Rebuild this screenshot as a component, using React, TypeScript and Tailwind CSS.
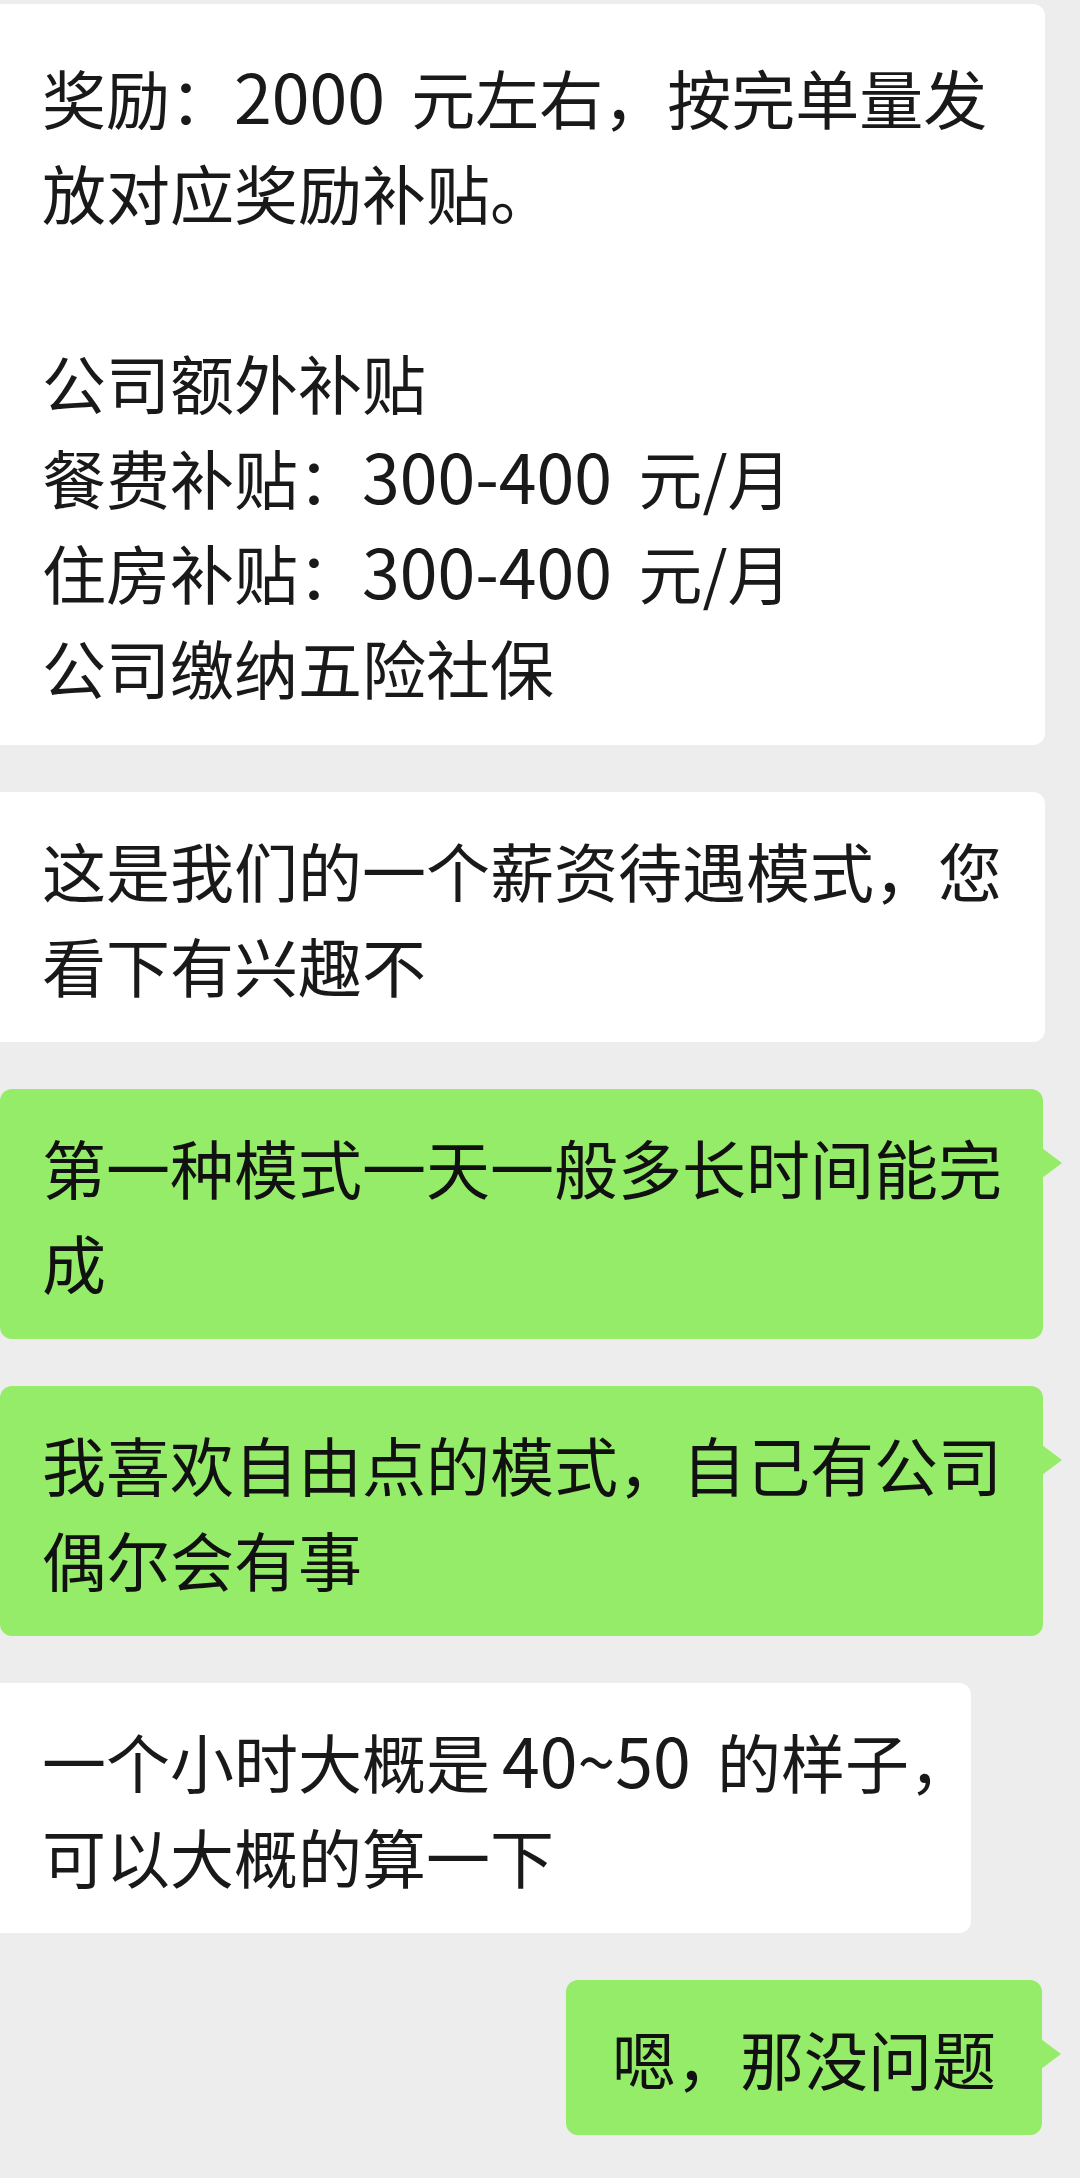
import React from "react";

const font = {
  fontFamily: '"Noto Sans CJK SC", "Noto Sans", sans-serif',
};

type Line = React.ReactNode;

function Lines({ lines }: { lines: Line[] }) {
  return (
    <>
      {lines.map((l, i) =>
        l === "" ? (
          <div key={i} className="h-[95px]" />
        ) : (
          <div key={i} className="whitespace-nowrap h-[95px]">
            {l}
          </div>
        )
      )}
    </>
  );
}

function Num({ children, className = "" }: { children: React.ReactNode; className?: string }) {
  return (
    <span className={`text-[68px] leading-none mr-[12px] ${className}`}>{children}</span>
  );
}

function Received({
  lines,
  width,
  className = "",
}: {
  lines: Line[];
  width: string;
  className?: string;
}) {
  return (
    <div
      className={`bg-white rounded-r-[12px] pl-[42px] pr-[40px] text-[#191919] ${width} ${className}`}
    >
      <Lines lines={lines} />
    </div>
  );
}

function Sent({
  lines,
  className = "",
}: {
  lines: Line[];
  className?: string;
}) {
  return (
    <div
      className={`relative bg-[#95ec69] rounded-[12px] py-[30px] text-[#111111] ${className}`}
    >
      <Lines lines={lines} />
      <div className="absolute right-[-19px] top-[59px] w-0 h-0 border-y-[15px] border-y-transparent border-l-[20px] border-l-[#95ec69]" />
    </div>
  );
}

export default function App() {
  return (
    <div
      className="w-[1080px] h-[2178px] bg-[#ededed] overflow-hidden pt-[4px] flex flex-col gap-[47px] text-[64px] leading-[95px]"
      style={font}
    >
      <Received
        width="w-[1045px]"
        className="pt-[45px] pb-[31px]"
        lines={[
          <>
            奖励：<Num>2000</Num> 元左右，按完单量发
          </>,
          "放对应奖励补贴。",
          "",
          "公司额外补贴",
          <>
            餐费补贴：<Num>300-400</Num> 元/月
          </>,
          <>
            住房补贴：<Num>300-400</Num> 元/月
          </>,
          "公司缴纳五险社保",
        ]}
      />
      <Received
        width="w-[1045px]"
        className="py-[30px]"
        lines={["这是我们的一个薪资待遇模式，您", "看下有兴趣不"]}
      />
      <Sent
        className="w-[1043px] pl-[42px] pr-[40px]"
        lines={["第一种模式一天一般多长时间能完", "成"]}
      />
      <Sent
        className="w-[1043px] pl-[42px] pr-[40px]"
        lines={["我喜欢自由点的模式，自己有公司", "偶尔会有事"]}
      />
      <Received
        width="w-[971px]"
        className="py-[30px]"
        lines={[
          <>
            一个小时大概是<Num className="ml-[12px]">40~50</Num> 的样子，
          </>,
          "可以大概的算一下",
        ]}
      />
      <div className="flex justify-end pr-[38px]">
        <Sent className="pl-[46px] pr-[46px]" lines={["嗯，那没问题"]} />
      </div>
    </div>
  );
}
